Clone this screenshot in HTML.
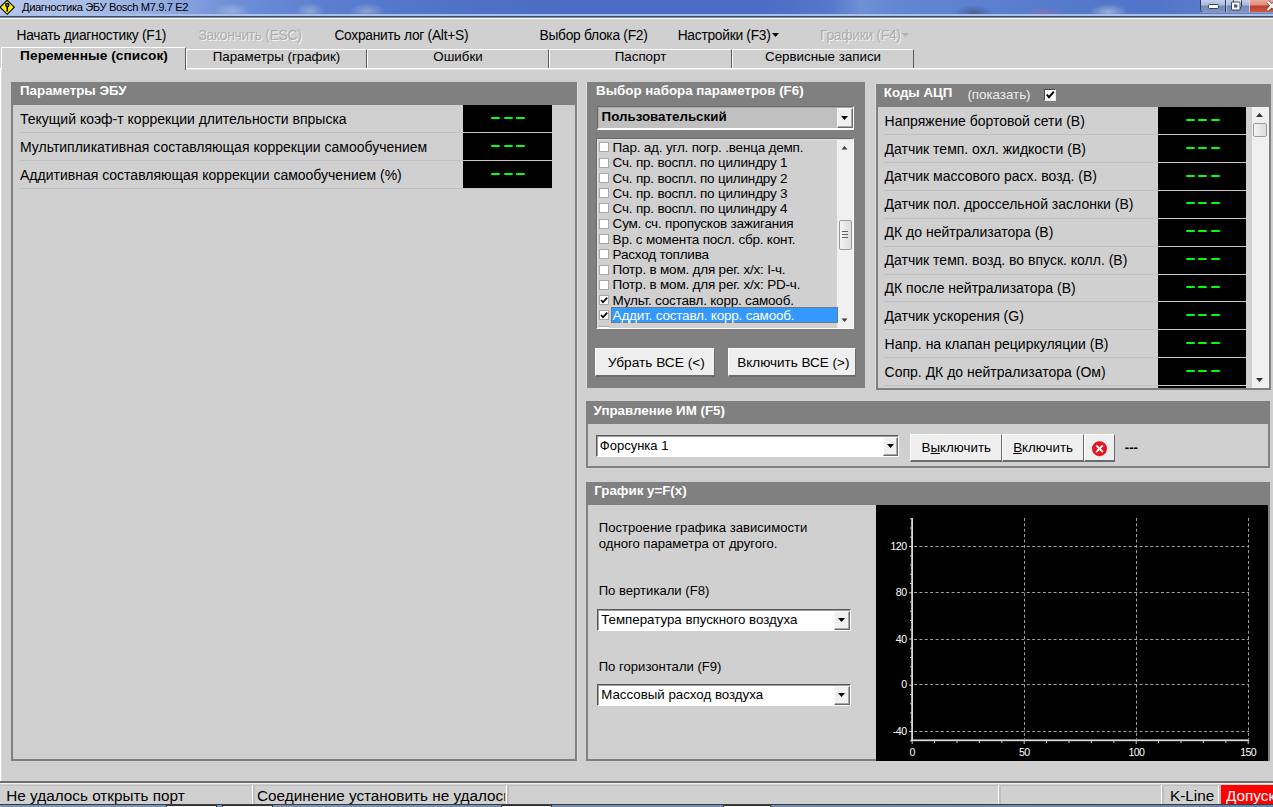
<!DOCTYPE html>
<html><head><meta charset="utf-8"><style>
html,body{margin:0;padding:0;width:1273px;height:807px;overflow:hidden;background:#d0d0d0;}
body{position:relative;font-family:"Liberation Sans",sans-serif;}
body>div{position:absolute;}
.t{white-space:nowrap;}
.btn{background:#efefef;border-top:1px solid #fcfcfc;border-left:1px solid #fcfcfc;border-right:1px solid #6b6b6b;border-bottom:2px solid #6b6b6b;box-sizing:border-box;}
</style></head><body>
<div style="left:0;top:0;width:1273px;height:16px;background:linear-gradient(90deg,#b4c6ea 0px,#a9bde6 90px,#8ea8e0 170px,#6f8fd8 230px,#5c7fd0 320px,#5175c9 420px,#4a6cc4 560px,#4a6cc4 760px,#5578cb 830px,#6f90d8 860px,#6186d2 900px,#5a7fcf 1000px,#4f74c8 1150px,#5a7bcb 1200px,#6a8ad2 1273px)"></div>
<div style="left:212px;top:0;width:40px;height:16px;background:radial-gradient(ellipse 18.0px 8px at 50% 11px,rgba(190,200,220,0.55),rgba(0,0,0,0))"></div>
<div style="left:293px;top:0;width:34px;height:16px;background:radial-gradient(ellipse 15.0px 8px at 50% 11px,rgba(190,200,220,0.5),rgba(0,0,0,0))"></div>
<div style="left:347px;top:0;width:40px;height:16px;background:radial-gradient(ellipse 18.0px 8px at 50% 11px,rgba(190,200,220,0.5),rgba(0,0,0,0))"></div>
<div style="left:952px;top:0;width:44px;height:16px;background:radial-gradient(ellipse 20.0px 8px at 50% 13px,rgba(60,70,100,0.55),rgba(0,0,0,0))"></div>
<div style="left:1020px;top:0;width:47px;height:16px;background:radial-gradient(ellipse 21.5px 8px at 50% 14px,rgba(170,110,160,0.5),rgba(0,0,0,0))"></div>
<div style="left:1087px;top:0;width:43px;height:16px;background:radial-gradient(ellipse 19.5px 8px at 50% 12px,rgba(200,210,230,0.6),rgba(0,0,0,0))"></div>
<div style="left:0px;top:14px;width:1273px;height:2px;background:#a9c0ea"></div>
<div style="left:0px;top:16px;width:1273px;height:1px;background:#3c4e72"></div>
<div style="left:0px;top:17px;width:1273px;height:1px;background:#7a879c"></div>
<div style="left:0px;top:18px;width:1273px;height:1px;background:#ffffff"></div>
<svg style="position:absolute;left:0;top:0" width="16" height="16" viewBox="0 0 16 16"><path d="M7.2 0.3 L14.3 7.2 L7.2 14.3 L0.1 7.2 Z" fill="#ffee00" stroke="#000" stroke-width="1.1"/><circle cx="7.3" cy="5.1" r="1.55" fill="#b8b000" stroke="#000" stroke-width="1.4"/><rect x="6.5" y="6.6" width="1.6" height="5" fill="#000"/></svg>
<div class="t" style="left:22px;top:2.02px;font-size:11.2px;line-height:11.2px;color:#000;letter-spacing:-0.4px">Диагностика ЭБУ Bosch M7.9.7 E2</div>
<svg style="position:absolute;left:1195px;top:0" width="78" height="16" viewBox="1195 0 78 16">
<defs>
<linearGradient id="gb" x1="0" y1="0" x2="0" y2="1"><stop offset="0" stop-color="#c3cfe8"/><stop offset="0.4" stop-color="#a9b9dc"/><stop offset="0.45" stop-color="#7189bb"/><stop offset="1" stop-color="#8297c4"/></linearGradient>
<linearGradient id="gr" x1="0" y1="0" x2="0" y2="1"><stop offset="0" stop-color="#e9aca0"/><stop offset="0.4" stop-color="#dc8d7c"/><stop offset="0.45" stop-color="#c0392a"/><stop offset="1" stop-color="#d26048"/></linearGradient>
</defs>
<path d="M1200 0 V9.5 Q1200 13 1203.5 13 H1249 V0 Z" fill="url(#gb)"/><path d="M1200.5 0 V9.5 Q1200.5 12.5 1203.5 12.5 H1249" fill="none" stroke="#2f3b55" stroke-width="1"/>
<rect x="1249" y="0" width="24" height="13" fill="url(#gr)"/>
<line x1="1249.5" y1="0" x2="1249.5" y2="13" stroke="#e9eef8" stroke-width="1" opacity="0.7"/>
<line x1="1225.5" y1="0" x2="1225.5" y2="13" stroke="#2f3b55" stroke-width="1"/>
<line x1="1226.5" y1="0" x2="1226.5" y2="13" stroke="#dfe6f5" stroke-width="0.8" opacity="0.6"/>
<line x1="1201" y1="12.5" x2="1273" y2="12.5" stroke="#8e98ae" stroke-width="1.2"/>
<rect x="1208.5" y="4.5" width="10" height="4" rx="1" fill="#fff" stroke="#2a3346" stroke-width="0.9"/>
<rect x="1233.5" y="-0.5" width="8" height="8" rx="1" fill="#dfe4ee" stroke="#2a3346" stroke-width="0.9"/>
<rect x="1231.5" y="2" width="8.5" height="8" rx="1" fill="#fff" stroke="#2a3346" stroke-width="0.9"/>
<rect x="1234" y="4.5" width="3.5" height="3" fill="#3d5a9a"/>
<path d="M1267.5 1.5 L1276 10 M1276 1.5 L1267.5 10" stroke="#4a2a2a" stroke-width="3.6" opacity="0.8"/>
<path d="M1267.5 1.5 L1276 10 M1276 1.5 L1267.5 10" stroke="#f4f4f4" stroke-width="2.3"/>
</svg>
<div class="t" style="left:16.5px;top:28.52px;font-size:13.8px;line-height:13.8px;color:#000;letter-spacing:-0.28px">Начать диагностику (F1)</div>
<div class="t" style="left:198.4px;top:28.52px;font-size:13.8px;line-height:13.8px;color:#adadad;letter-spacing:-0.28px;text-shadow:1px 1px 0 #f4f4f4">Закончить (ESC)</div>
<div class="t" style="left:334.4px;top:28.52px;font-size:13.8px;line-height:13.8px;color:#000;letter-spacing:-0.28px">Сохранить лог (Alt+S)</div>
<div class="t" style="left:539.5px;top:28.52px;font-size:13.8px;line-height:13.8px;color:#000;letter-spacing:-0.28px">Выбор блока (F2)</div>
<div class="t" style="left:677.7px;top:28.52px;font-size:13.8px;line-height:13.8px;color:#000;letter-spacing:-0.28px">Настройки (F3)</div>
<svg style="position:absolute;left:772px;top:33px" width="8" height="5"><path d="M0 0H7L3.5 4Z" fill="#000"/></svg>
<div class="t" style="left:820px;top:28.52px;font-size:13.8px;line-height:13.8px;color:#adadad;letter-spacing:-0.28px;text-shadow:1px 1px 0 #f4f4f4">Графики (F4)</div>
<svg style="position:absolute;left:902px;top:33px" width="8" height="5"><path d="M0 0H7L3.5 4Z" fill="#b0b0b0"/></svg>
<div style="left:0px;top:68px;width:1273px;height:1px;background:#fff"></div>
<div style="left:0px;top:69px;width:1273px;height:1px;background:#e4e4e4"></div>
<div style="left:186px;top:49px;width:181px;height:19px;border-top:1px solid #fff;border-left:1px solid #fff;border-right:1px solid #5a5a5a;box-sizing:border-box"></div>
<div class="t" style="left:186px;width:181px;top:50.22px;font-size:13.33px;line-height:13.33px;text-align:center">Параметры (график)</div>
<div style="left:367px;top:49px;width:182px;height:19px;border-top:1px solid #fff;border-left:1px solid #fff;border-right:1px solid #5a5a5a;box-sizing:border-box"></div>
<div class="t" style="left:367px;width:182px;top:50.22px;font-size:13.33px;line-height:13.33px;text-align:center">Ошибки</div>
<div style="left:549px;top:49px;width:183px;height:19px;border-top:1px solid #fff;border-left:1px solid #fff;border-right:1px solid #5a5a5a;box-sizing:border-box"></div>
<div class="t" style="left:549px;width:183px;top:50.22px;font-size:13.33px;line-height:13.33px;text-align:center">Паспорт</div>
<div style="left:732px;top:49px;width:182px;height:19px;border-top:1px solid #fff;border-left:1px solid #fff;border-right:1px solid #5a5a5a;box-sizing:border-box"></div>
<div class="t" style="left:732px;width:182px;top:50.22px;font-size:13.33px;line-height:13.33px;text-align:center">Сервисные записи</div>
<div style="left:1px;top:47px;width:185px;height:23px;background:#d0d0d0;border-top:1px solid #fff;border-left:1px solid #fff;border-right:1px solid #5a5a5a;box-sizing:border-box"></div>
<div class="t" style="left:20.1px;top:49.00px;font-size:13.7px;line-height:13.7px;color:#000;font-weight:bold;letter-spacing:0.05px">Переменные (список)</div>
<div style="left:0px;top:69px;width:1px;height:712px;background:#fff"></div>
<div style="left:1px;top:69px;width:1px;height:712px;background:#dadada"></div>
<div style="left:11px;top:82px;width:566px;height:679px;background:#808080"></div>
<div style="left:13px;top:105px;width:562px;height:654px;background:#d0d0d0"></div>
<div class="t" style="left:20px;top:84.42px;font-size:13.33px;line-height:13.33px;color:#fff;font-weight:bold;">Параметры ЭБУ</div>
<div class="t" style="left:20px;top:111.85px;font-size:14px;line-height:14px;color:#000;transform:scaleY(1.07);transform-origin:0 11.85px;">Текущий коэф-т коррекции длительности впрыска</div>
<div style="left:20px;top:132px;width:443px;height:1px;background:#c0c0c0"></div>
<div style="left:463px;top:105px;width:89px;height:27px;background:#000"></div>
<div style="left:463px;top:132px;width:89px;height:1px;background:#c8c8c8"></div>
<div style="left:491.0px;top:117px;width:9px;height:2px;background:#00ff00;border-radius:1px"></div>
<div style="left:503.5px;top:117px;width:9px;height:2px;background:#00ff00;border-radius:1px"></div>
<div style="left:516.0px;top:117px;width:9px;height:2px;background:#00ff00;border-radius:1px"></div>
<div class="t" style="left:20px;top:139.75px;font-size:14px;line-height:14px;color:#000;transform:scaleY(1.07);transform-origin:0 11.85px;">Мультипликативная составляющая коррекции самообучением</div>
<div style="left:20px;top:160px;width:443px;height:1px;background:#c0c0c0"></div>
<div style="left:463px;top:133px;width:89px;height:27px;background:#000"></div>
<div style="left:463px;top:160px;width:89px;height:1px;background:#c8c8c8"></div>
<div style="left:491.0px;top:145px;width:9px;height:2px;background:#00ff00;border-radius:1px"></div>
<div style="left:503.5px;top:145px;width:9px;height:2px;background:#00ff00;border-radius:1px"></div>
<div style="left:516.0px;top:145px;width:9px;height:2px;background:#00ff00;border-radius:1px"></div>
<div class="t" style="left:20px;top:167.65px;font-size:14px;line-height:14px;color:#000;transform:scaleY(1.07);transform-origin:0 11.85px;">Аддитивная составляющая коррекции самообучением (%)</div>
<div style="left:20px;top:188px;width:443px;height:1px;background:#c0c0c0"></div>
<div style="left:463px;top:161px;width:89px;height:27px;background:#000"></div>
<div style="left:463px;top:188px;width:89px;height:1px;background:#c8c8c8"></div>
<div style="left:491.0px;top:173px;width:9px;height:2px;background:#00ff00;border-radius:1px"></div>
<div style="left:503.5px;top:173px;width:9px;height:2px;background:#00ff00;border-radius:1px"></div>
<div style="left:516.0px;top:173px;width:9px;height:2px;background:#00ff00;border-radius:1px"></div>
<div style="left:587px;top:82px;width:278px;height:306px;background:#808080"></div>
<div style="left:586px;top:82px;width:1px;height:306px;background:#dcdcdc"></div>
<div style="left:577px;top:82px;width:1px;height:679px;background:#dcdcdc"></div>
<div style="left:875px;top:84px;width:1px;height:306px;background:#dcdcdc"></div>
<div class="t" style="left:596px;top:84.22px;font-size:13.33px;line-height:13.33px;color:#fff;font-weight:bold;">Выбор набора параметров (F6)</div>
<div style="left:597px;top:106px;width:257px;height:24px;border-top:1px solid #6a6a6a;border-left:1px solid #6a6a6a;border-right:1px solid #fff;border-bottom:2px solid #fff;box-shadow:inset 1px 1px 0 #a8a8a8;box-sizing:border-box;background:#c0c0c0"></div>
<div style="left:837px;top:108px;width:16px;height:20px;background:#f0f0f0;border-top:1px solid #fafafa;border-left:1px solid #fafafa;border-right:1px solid #696969;border-bottom:1px solid #696969;box-shadow:inset -1px -1px 0 #a8a8a8;box-sizing:border-box"></div>
<svg style="position:absolute;left:841px;top:116px" width="8" height="5"><path d="M0 0H7L3.5 4Z" fill="#000"/></svg>
<div class="t" style="left:601.6px;top:110.42px;font-size:13.33px;line-height:13.33px;color:#000;font-weight:bold;">Пользовательский</div>
<div style="left:596px;top:138px;width:258px;height:191px;border-top:1px solid #6a6a6a;border-left:1px solid #6a6a6a;border-right:1px solid #fff;border-bottom:1px solid #fff;box-shadow:inset 1px 1px 0 #e4e4e4;box-sizing:border-box;background:#d0d0d0"></div>
<div style="left:837px;top:140px;width:16px;height:188px;background:#f0f0f0"></div>
<svg style="position:absolute;left:841px;top:145px" width="8" height="5"><path d="M0.5 4.5H6.5L3.5 1Z" fill="#404040"/></svg>
<svg style="position:absolute;left:841px;top:318px" width="8" height="5"><path d="M0.5 0.5H6.5L3.5 4Z" fill="#404040"/></svg>
<div style="left:839px;top:220px;width:13px;height:30px;border:1px solid #9a9a9a;border-radius:2px;box-sizing:border-box;background:linear-gradient(90deg,#f4f4f4,#dcdcdc)"></div>
<div style="left:842px;top:231px;width:6px;height:1px;background:#606060"></div>
<div style="left:842px;top:234px;width:6px;height:1px;background:#606060"></div>
<div style="left:842px;top:237px;width:6px;height:1px;background:#606060"></div>
<div class="t" style="left:612.6px;top:140.97px;font-size:13.5px;line-height:13.5px;color:#000;letter-spacing:-0.2px">Пар. ад. угл. погр. .венца демп.</div>
<div style="left:599px;top:142.4px;width:10px;height:10px;background:#fff;border:1px solid #a8a8a8;box-sizing:border-box"></div>
<div class="t" style="left:612.6px;top:156.24px;font-size:13.5px;line-height:13.5px;color:#000;letter-spacing:-0.2px">Сч. пр. воспл. по цилиндру 1</div>
<div style="left:599px;top:157.67000000000002px;width:10px;height:10px;background:#fff;border:1px solid #a8a8a8;box-sizing:border-box"></div>
<div class="t" style="left:612.6px;top:171.51px;font-size:13.5px;line-height:13.5px;color:#000;letter-spacing:-0.2px">Сч. пр. воспл. по цилиндру 2</div>
<div style="left:599px;top:172.94px;width:10px;height:10px;background:#fff;border:1px solid #a8a8a8;box-sizing:border-box"></div>
<div class="t" style="left:612.6px;top:186.78px;font-size:13.5px;line-height:13.5px;color:#000;letter-spacing:-0.2px">Сч. пр. воспл. по цилиндру 3</div>
<div style="left:599px;top:188.21px;width:10px;height:10px;background:#fff;border:1px solid #a8a8a8;box-sizing:border-box"></div>
<div class="t" style="left:612.6px;top:202.05px;font-size:13.5px;line-height:13.5px;color:#000;letter-spacing:-0.2px">Сч. пр. воспл. по цилиндру 4</div>
<div style="left:599px;top:203.48000000000002px;width:10px;height:10px;background:#fff;border:1px solid #a8a8a8;box-sizing:border-box"></div>
<div class="t" style="left:612.6px;top:217.32px;font-size:13.5px;line-height:13.5px;color:#000;letter-spacing:-0.2px">Сум. сч. пропусков зажигания</div>
<div style="left:599px;top:218.75px;width:10px;height:10px;background:#fff;border:1px solid #a8a8a8;box-sizing:border-box"></div>
<div class="t" style="left:612.6px;top:232.59px;font-size:13.5px;line-height:13.5px;color:#000;letter-spacing:-0.2px">Вр. с момента посл. сбр. конт.</div>
<div style="left:599px;top:234.02px;width:10px;height:10px;background:#fff;border:1px solid #a8a8a8;box-sizing:border-box"></div>
<div class="t" style="left:612.6px;top:247.86px;font-size:13.5px;line-height:13.5px;color:#000;letter-spacing:-0.2px">Расход топлива</div>
<div style="left:599px;top:249.29000000000002px;width:10px;height:10px;background:#fff;border:1px solid #a8a8a8;box-sizing:border-box"></div>
<div class="t" style="left:612.6px;top:263.13px;font-size:13.5px;line-height:13.5px;color:#000;letter-spacing:-0.2px">Потр. в мом. для рег. х/х: I-ч.</div>
<div style="left:599px;top:264.56px;width:10px;height:10px;background:#fff;border:1px solid #a8a8a8;box-sizing:border-box"></div>
<div class="t" style="left:612.6px;top:278.40px;font-size:13.5px;line-height:13.5px;color:#000;letter-spacing:-0.2px">Потр. в мом. для рег. х/х: PD-ч.</div>
<div style="left:599px;top:279.83000000000004px;width:10px;height:10px;background:#fff;border:1px solid #a8a8a8;box-sizing:border-box"></div>
<div class="t" style="left:612.6px;top:293.67px;font-size:13.5px;line-height:13.5px;color:#000;letter-spacing:-0.2px">Мульт. составл. корр. самооб.</div>
<div style="left:599px;top:295.1px;width:10px;height:10px;background:#fff;border:1px solid #a8a8a8;box-sizing:border-box"></div>
<svg style="position:absolute;left:599px;top:295.1px" width="10" height="10"><path d="M2 5L4 7.3L8.2 2.6" stroke="#000" stroke-width="1.7" fill="none"/></svg>
<div style="left:611px;top:307.37px;width:227px;height:16px;background:#3399ff;outline:1px dotted #a06020;outline-offset:-1px"></div>
<div class="t" style="left:612.6px;top:308.94px;font-size:13.5px;line-height:13.5px;color:#fff;letter-spacing:-0.2px">Аддит. составл. корр. самооб.</div>
<div style="left:599px;top:310.37px;width:10px;height:10px;background:#fff;border:1px solid #a8a8a8;box-sizing:border-box"></div>
<svg style="position:absolute;left:599px;top:310.4px" width="10" height="10"><path d="M2 5L4 7.3L8.2 2.6" stroke="#000" stroke-width="1.7" fill="none"/></svg>
<div style="left:599px;top:325.64px;width:10px;height:2.5px;background:#fff;border-top:1px solid #a8a8a8;box-sizing:border-box"></div>
<div class="btn" style="left:595px;top:348px;width:120px;height:29px"></div>
<div class="t" style="left:607.8px;top:356.00px;font-size:13.7px;line-height:13.7px;color:#000;">Убрать ВСЕ (&lt;)</div>
<div class="btn" style="left:728px;top:348px;width:128px;height:29px"></div>
<div class="t" style="left:737.2px;top:356.17px;font-size:13.5px;line-height:13.5px;color:#000;">Включить ВСЕ (&gt;)</div>
<div style="left:876px;top:84px;width:395px;height:306px;background:#808080"></div>
<div style="left:878px;top:107px;width:391px;height:281px;background:#d0d0d0"></div>
<div class="t" style="left:883.8px;top:85.72px;font-size:13.33px;line-height:13.33px;color:#fff;font-weight:bold;">Коды АЦП</div>
<div class="t" style="left:967.4px;top:88.32px;font-size:13.33px;line-height:13.33px;color:#ececec;">(показать)</div>
<div style="left:1044px;top:89px;width:12px;height:12px;background:#fff;border-top:1px solid #4a4a4a;border-left:1px solid #4a4a4a;border-right:1px solid #e8e8e8;border-bottom:1px solid #e8e8e8;box-sizing:border-box"></div>
<svg style="position:absolute;left:1044px;top:89px" width="12" height="12"><path d="M2.8 5.6L5 8.2L9.8 2.6" stroke="#000" stroke-width="2" fill="none"/></svg>
<div class="t" style="left:884.6px;top:113.65px;font-size:14px;line-height:14px;color:#000;transform:scaleY(1.05);transform-origin:0 11.85px;">Напряжение бортовой сети (В)</div>
<div style="left:884px;top:134px;width:274px;height:1px;background:#c0c0c0"></div>
<div style="left:1158px;top:107px;width:88px;height:27px;background:#000"></div>
<div style="left:1158px;top:134px;width:88px;height:1px;background:#c8c8c8"></div>
<div style="left:1186.0px;top:119px;width:9px;height:2px;background:#00ff00;border-radius:1px"></div>
<div style="left:1198.4px;top:119px;width:9px;height:2px;background:#00ff00;border-radius:1px"></div>
<div style="left:1210.8px;top:119px;width:9px;height:2px;background:#00ff00;border-radius:1px"></div>
<div class="t" style="left:884.6px;top:141.55px;font-size:14px;line-height:14px;color:#000;transform:scaleY(1.05);transform-origin:0 11.85px;">Датчик темп. охл. жидкости (В)</div>
<div style="left:884px;top:162px;width:274px;height:1px;background:#c0c0c0"></div>
<div style="left:1158px;top:135px;width:88px;height:27px;background:#000"></div>
<div style="left:1158px;top:162px;width:88px;height:1px;background:#c8c8c8"></div>
<div style="left:1186.0px;top:147px;width:9px;height:2px;background:#00ff00;border-radius:1px"></div>
<div style="left:1198.4px;top:147px;width:9px;height:2px;background:#00ff00;border-radius:1px"></div>
<div style="left:1210.8px;top:147px;width:9px;height:2px;background:#00ff00;border-radius:1px"></div>
<div class="t" style="left:884.6px;top:169.45px;font-size:14px;line-height:14px;color:#000;transform:scaleY(1.05);transform-origin:0 11.85px;">Датчик массового расх. возд. (В)</div>
<div style="left:884px;top:190px;width:274px;height:1px;background:#c0c0c0"></div>
<div style="left:1158px;top:163px;width:88px;height:27px;background:#000"></div>
<div style="left:1158px;top:190px;width:88px;height:1px;background:#c8c8c8"></div>
<div style="left:1186.0px;top:175px;width:9px;height:2px;background:#00ff00;border-radius:1px"></div>
<div style="left:1198.4px;top:175px;width:9px;height:2px;background:#00ff00;border-radius:1px"></div>
<div style="left:1210.8px;top:175px;width:9px;height:2px;background:#00ff00;border-radius:1px"></div>
<div class="t" style="left:884.6px;top:197.35px;font-size:14px;line-height:14px;color:#000;transform:scaleY(1.05);transform-origin:0 11.85px;">Датчик пол. дроссельной заслонки (В)</div>
<div style="left:884px;top:218px;width:274px;height:1px;background:#c0c0c0"></div>
<div style="left:1158px;top:191px;width:88px;height:27px;background:#000"></div>
<div style="left:1158px;top:218px;width:88px;height:1px;background:#c8c8c8"></div>
<div style="left:1186.0px;top:202px;width:9px;height:2px;background:#00ff00;border-radius:1px"></div>
<div style="left:1198.4px;top:202px;width:9px;height:2px;background:#00ff00;border-radius:1px"></div>
<div style="left:1210.8px;top:202px;width:9px;height:2px;background:#00ff00;border-radius:1px"></div>
<div class="t" style="left:884.6px;top:225.25px;font-size:14px;line-height:14px;color:#000;transform:scaleY(1.05);transform-origin:0 11.85px;">ДК до нейтрализатора (В)</div>
<div style="left:884px;top:246px;width:274px;height:1px;background:#c0c0c0"></div>
<div style="left:1158px;top:219px;width:88px;height:27px;background:#000"></div>
<div style="left:1158px;top:246px;width:88px;height:1px;background:#c8c8c8"></div>
<div style="left:1186.0px;top:230px;width:9px;height:2px;background:#00ff00;border-radius:1px"></div>
<div style="left:1198.4px;top:230px;width:9px;height:2px;background:#00ff00;border-radius:1px"></div>
<div style="left:1210.8px;top:230px;width:9px;height:2px;background:#00ff00;border-radius:1px"></div>
<div class="t" style="left:884.6px;top:253.15px;font-size:14px;line-height:14px;color:#000;transform:scaleY(1.05);transform-origin:0 11.85px;">Датчик темп. возд. во впуск. колл. (В)</div>
<div style="left:884px;top:274px;width:274px;height:1px;background:#c0c0c0"></div>
<div style="left:1158px;top:247px;width:88px;height:27px;background:#000"></div>
<div style="left:1158px;top:274px;width:88px;height:1px;background:#c8c8c8"></div>
<div style="left:1186.0px;top:258px;width:9px;height:2px;background:#00ff00;border-radius:1px"></div>
<div style="left:1198.4px;top:258px;width:9px;height:2px;background:#00ff00;border-radius:1px"></div>
<div style="left:1210.8px;top:258px;width:9px;height:2px;background:#00ff00;border-radius:1px"></div>
<div class="t" style="left:884.6px;top:281.05px;font-size:14px;line-height:14px;color:#000;transform:scaleY(1.05);transform-origin:0 11.85px;">ДК после нейтрализатора (В)</div>
<div style="left:884px;top:301px;width:274px;height:1px;background:#c0c0c0"></div>
<div style="left:1158px;top:275px;width:88px;height:26px;background:#000"></div>
<div style="left:1158px;top:301px;width:88px;height:1px;background:#c8c8c8"></div>
<div style="left:1186.0px;top:286px;width:9px;height:2px;background:#00ff00;border-radius:1px"></div>
<div style="left:1198.4px;top:286px;width:9px;height:2px;background:#00ff00;border-radius:1px"></div>
<div style="left:1210.8px;top:286px;width:9px;height:2px;background:#00ff00;border-radius:1px"></div>
<div class="t" style="left:884.6px;top:308.95px;font-size:14px;line-height:14px;color:#000;transform:scaleY(1.05);transform-origin:0 11.85px;">Датчик ускорения (G)</div>
<div style="left:884px;top:329px;width:274px;height:1px;background:#c0c0c0"></div>
<div style="left:1158px;top:302px;width:88px;height:27px;background:#000"></div>
<div style="left:1158px;top:329px;width:88px;height:1px;background:#c8c8c8"></div>
<div style="left:1186.0px;top:314px;width:9px;height:2px;background:#00ff00;border-radius:1px"></div>
<div style="left:1198.4px;top:314px;width:9px;height:2px;background:#00ff00;border-radius:1px"></div>
<div style="left:1210.8px;top:314px;width:9px;height:2px;background:#00ff00;border-radius:1px"></div>
<div class="t" style="left:884.6px;top:336.85px;font-size:14px;line-height:14px;color:#000;transform:scaleY(1.05);transform-origin:0 11.85px;">Напр. на клапан рециркуляции (В)</div>
<div style="left:884px;top:357px;width:274px;height:1px;background:#c0c0c0"></div>
<div style="left:1158px;top:330px;width:88px;height:27px;background:#000"></div>
<div style="left:1158px;top:357px;width:88px;height:1px;background:#c8c8c8"></div>
<div style="left:1186.0px;top:342px;width:9px;height:2px;background:#00ff00;border-radius:1px"></div>
<div style="left:1198.4px;top:342px;width:9px;height:2px;background:#00ff00;border-radius:1px"></div>
<div style="left:1210.8px;top:342px;width:9px;height:2px;background:#00ff00;border-radius:1px"></div>
<div class="t" style="left:884.6px;top:364.75px;font-size:14px;line-height:14px;color:#000;transform:scaleY(1.05);transform-origin:0 11.85px;">Сопр. ДК до нейтрализатора (Ом)</div>
<div style="left:884px;top:385px;width:274px;height:1px;background:#c0c0c0"></div>
<div style="left:1158px;top:358px;width:88px;height:27px;background:#000"></div>
<div style="left:1158px;top:385px;width:88px;height:1px;background:#c8c8c8"></div>
<div style="left:1186.0px;top:370px;width:9px;height:2px;background:#00ff00;border-radius:1px"></div>
<div style="left:1198.4px;top:370px;width:9px;height:2px;background:#00ff00;border-radius:1px"></div>
<div style="left:1210.8px;top:370px;width:9px;height:2px;background:#00ff00;border-radius:1px"></div>
<div style="left:1158px;top:386px;width:88px;height:2px;background:#000"></div>
<div style="left:1246px;top:107px;width:6px;height:281px;background:#cfcfcf"></div>
<div style="left:1252px;top:107px;width:17px;height:281px;background:#f0f0f0"></div>
<svg style="position:absolute;left:1256px;top:113px" width="8" height="5"><path d="M0 4H7L3.5 0Z" fill="#333"/></svg>
<svg style="position:absolute;left:1256px;top:378px" width="8" height="5"><path d="M0 0H7L3.5 4Z" fill="#333"/></svg>
<div style="left:1253px;top:123px;width:14px;height:14px;border:1px solid #9a9a9a;border-radius:2px;box-sizing:border-box;background:linear-gradient(90deg,#f4f4f4,#dcdcdc)"></div>
<div style="left:586px;top:401px;width:684px;height:67px;background:#808080"></div>
<div style="left:588px;top:424px;width:680px;height:42px;background:#d0d0d0"></div>
<div class="t" style="left:593.6px;top:403.52px;font-size:13.33px;line-height:13.33px;color:#fff;font-weight:bold;">Управление ИМ (F5)</div>
<div style="left:596px;top:435px;width:303px;height:22px;border-top:1px solid #5a5a5a;border-left:1px solid #5a5a5a;border-right:1px solid #fff;border-bottom:1px solid #fff;box-shadow:inset 1px 1px 0 #9c9c9c;box-sizing:border-box;background:#fff"></div>
<div style="left:883px;top:437px;width:15px;height:19px;background:#f0f0f0;border-top:1px solid #fafafa;border-left:1px solid #fafafa;border-right:1px solid #696969;border-bottom:1px solid #696969;box-shadow:inset -1px -1px 0 #a8a8a8;box-sizing:border-box"></div>
<svg style="position:absolute;left:887px;top:444px" width="8" height="5"><path d="M0 0H7L3.5 4Z" fill="#000"/></svg>
<div class="t" style="left:599.8px;top:439.10px;font-size:13px;line-height:13px;color:#000;">Форсунка 1</div>
<div class="btn" style="left:910px;top:434px;width:92px;height:28px"></div>
<div class="t" style="left:921.6px;top:441.32px;font-size:13.33px;line-height:13.33px;color:#000;">В<u>ы</u>ключить</div>
<div class="btn" style="left:1002px;top:434px;width:82px;height:28px"></div>
<div class="t" style="left:1013.2px;top:441.32px;font-size:13.33px;line-height:13.33px;color:#000;"><u>В</u>ключить</div>
<div class="btn" style="left:1084px;top:434px;width:31px;height:28px"></div>
<svg style="position:absolute;left:1091px;top:441px" width="17" height="16" viewBox="0 0 17 16"><circle cx="8.5" cy="7.7" r="7.2" fill="#e8141c" stroke="#c8000a" stroke-width="0.5"/><path d="M5.2 4.4L11.8 11M11.8 4.4L5.2 11" stroke="#fff" stroke-width="1.9"/></svg>
<div class="t" style="left:1124.7px;top:440.72px;font-size:13.33px;line-height:13.33px;color:#000;font-weight:bold;">---</div>
<div style="left:586px;top:482px;width:684px;height:279px;background:#808080"></div>
<div style="left:588px;top:505px;width:680px;height:254px;background:#d0d0d0"></div>
<div class="t" style="left:594.2px;top:484.22px;font-size:13.33px;line-height:13.33px;color:#fff;font-weight:bold;">График y=F(x)</div>
<div class="t" style="left:598.8px;top:521.31px;font-size:13.1px;line-height:13.1px;color:#000;">Построение графика зависимости</div>
<div class="t" style="left:598.8px;top:536.61px;font-size:13.1px;line-height:13.1px;color:#000;">одного параметра от другого.</div>
<div class="t" style="left:598.7px;top:584.31px;font-size:13.1px;line-height:13.1px;color:#000;">По вертикали (F8)</div>
<div class="t" style="left:598.7px;top:660.11px;font-size:13.1px;line-height:13.1px;color:#000;">По горизонтали (F9)</div>
<div style="left:597px;top:609px;width:254px;height:22px;border-top:1px solid #5a5a5a;border-left:1px solid #5a5a5a;border-right:1px solid #fff;border-bottom:1px solid #fff;box-shadow:inset 1px 1px 0 #9c9c9c;box-sizing:border-box;background:#fff"></div>
<div style="left:834px;top:611px;width:16px;height:19px;background:#f0f0f0;border-top:1px solid #fafafa;border-left:1px solid #fafafa;border-right:1px solid #696969;border-bottom:1px solid #696969;box-shadow:inset -1px -1px 0 #a8a8a8;box-sizing:border-box"></div>
<svg style="position:absolute;left:838px;top:618px" width="8" height="5"><path d="M0 0H7L3.5 4Z" fill="#000"/></svg>
<div class="t" style="left:601.2px;top:612.84px;font-size:13.3px;line-height:13.3px;color:#000;">Температура впускного воздуха</div>
<div style="left:597px;top:684px;width:254px;height:22px;border-top:1px solid #5a5a5a;border-left:1px solid #5a5a5a;border-right:1px solid #fff;border-bottom:1px solid #fff;box-shadow:inset 1px 1px 0 #9c9c9c;box-sizing:border-box;background:#fff"></div>
<div style="left:834px;top:686px;width:16px;height:19px;background:#f0f0f0;border-top:1px solid #fafafa;border-left:1px solid #fafafa;border-right:1px solid #696969;border-bottom:1px solid #696969;box-shadow:inset -1px -1px 0 #a8a8a8;box-sizing:border-box"></div>
<svg style="position:absolute;left:838px;top:693px" width="8" height="5"><path d="M0 0H7L3.5 4Z" fill="#000"/></svg>
<div class="t" style="left:601.2px;top:687.84px;font-size:13.3px;line-height:13.3px;color:#000;">Массовый расход воздуха</div>
<div style="left:876px;top:505px;width:392px;height:256px;background:#000"></div>
<svg style="position:absolute;left:876px;top:505px" width="392" height="256" viewBox="876 505 392 256"><line x1="914" y1="546.5" x2="1249" y2="546.5" stroke="#a0a0a0" stroke-width="1" stroke-dasharray="3 2.37"/><line x1="914" y1="592.5" x2="1249" y2="592.5" stroke="#a0a0a0" stroke-width="1" stroke-dasharray="3 2.37"/><line x1="914" y1="639.5" x2="1249" y2="639.5" stroke="#a0a0a0" stroke-width="1" stroke-dasharray="3 2.37"/><line x1="914" y1="684.5" x2="1249" y2="684.5" stroke="#a0a0a0" stroke-width="1" stroke-dasharray="3 2.37"/><line x1="914" y1="731.5" x2="1249" y2="731.5" stroke="#a0a0a0" stroke-width="1" stroke-dasharray="3 2.37"/><line x1="1024.5" y1="518" x2="1024.5" y2="739" stroke="#a0a0a0" stroke-width="1" stroke-dasharray="3 2.37"/><line x1="1136.5" y1="518" x2="1136.5" y2="739" stroke="#a0a0a0" stroke-width="1" stroke-dasharray="3 2.37"/><line x1="1248.5" y1="518" x2="1248.5" y2="739" stroke="#a0a0a0" stroke-width="1" stroke-dasharray="3 2.37"/><line x1="909" y1="731.5" x2="912" y2="731.5" stroke="#c8c8c8" stroke-width="1"/><line x1="910" y1="722.2" x2="912" y2="722.2" stroke="#c8c8c8" stroke-width="1"/><line x1="910" y1="713.0" x2="912" y2="713.0" stroke="#c8c8c8" stroke-width="1"/><line x1="910" y1="703.8" x2="912" y2="703.8" stroke="#c8c8c8" stroke-width="1"/><line x1="910" y1="694.5" x2="912" y2="694.5" stroke="#c8c8c8" stroke-width="1"/><line x1="909" y1="685.2" x2="912" y2="685.2" stroke="#c8c8c8" stroke-width="1"/><line x1="910" y1="676.0" x2="912" y2="676.0" stroke="#c8c8c8" stroke-width="1"/><line x1="910" y1="666.8" x2="912" y2="666.8" stroke="#c8c8c8" stroke-width="1"/><line x1="910" y1="657.5" x2="912" y2="657.5" stroke="#c8c8c8" stroke-width="1"/><line x1="910" y1="648.2" x2="912" y2="648.2" stroke="#c8c8c8" stroke-width="1"/><line x1="909" y1="639.0" x2="912" y2="639.0" stroke="#c8c8c8" stroke-width="1"/><line x1="910" y1="629.8" x2="912" y2="629.8" stroke="#c8c8c8" stroke-width="1"/><line x1="910" y1="620.5" x2="912" y2="620.5" stroke="#c8c8c8" stroke-width="1"/><line x1="910" y1="611.2" x2="912" y2="611.2" stroke="#c8c8c8" stroke-width="1"/><line x1="910" y1="602.0" x2="912" y2="602.0" stroke="#c8c8c8" stroke-width="1"/><line x1="909" y1="592.8" x2="912" y2="592.8" stroke="#c8c8c8" stroke-width="1"/><line x1="910" y1="583.5" x2="912" y2="583.5" stroke="#c8c8c8" stroke-width="1"/><line x1="910" y1="574.2" x2="912" y2="574.2" stroke="#c8c8c8" stroke-width="1"/><line x1="910" y1="565.0" x2="912" y2="565.0" stroke="#c8c8c8" stroke-width="1"/><line x1="910" y1="555.8" x2="912" y2="555.8" stroke="#c8c8c8" stroke-width="1"/><line x1="909" y1="546.5" x2="912" y2="546.5" stroke="#c8c8c8" stroke-width="1"/><line x1="910" y1="537.2" x2="912" y2="537.2" stroke="#c8c8c8" stroke-width="1"/><line x1="910" y1="528.0" x2="912" y2="528.0" stroke="#c8c8c8" stroke-width="1"/><line x1="910" y1="518.8" x2="912" y2="518.8" stroke="#c8c8c8" stroke-width="1"/><line x1="910" y1="740.8" x2="912" y2="740.8" stroke="#c8c8c8" stroke-width="1"/><line x1="912.2" y1="741" x2="912.2" y2="744" stroke="#c8c8c8" stroke-width="1"/><line x1="934.6" y1="741" x2="934.6" y2="743" stroke="#c8c8c8" stroke-width="1"/><line x1="957.0" y1="741" x2="957.0" y2="743" stroke="#c8c8c8" stroke-width="1"/><line x1="979.4" y1="741" x2="979.4" y2="743" stroke="#c8c8c8" stroke-width="1"/><line x1="1001.8" y1="741" x2="1001.8" y2="743" stroke="#c8c8c8" stroke-width="1"/><line x1="1024.2" y1="741" x2="1024.2" y2="744" stroke="#c8c8c8" stroke-width="1"/><line x1="1046.6" y1="741" x2="1046.6" y2="743" stroke="#c8c8c8" stroke-width="1"/><line x1="1069.0" y1="741" x2="1069.0" y2="743" stroke="#c8c8c8" stroke-width="1"/><line x1="1091.4" y1="741" x2="1091.4" y2="743" stroke="#c8c8c8" stroke-width="1"/><line x1="1113.8" y1="741" x2="1113.8" y2="743" stroke="#c8c8c8" stroke-width="1"/><line x1="1136.2" y1="741" x2="1136.2" y2="744" stroke="#c8c8c8" stroke-width="1"/><line x1="1158.6" y1="741" x2="1158.6" y2="743" stroke="#c8c8c8" stroke-width="1"/><line x1="1181.0" y1="741" x2="1181.0" y2="743" stroke="#c8c8c8" stroke-width="1"/><line x1="1203.4" y1="741" x2="1203.4" y2="743" stroke="#c8c8c8" stroke-width="1"/><line x1="1225.8" y1="741" x2="1225.8" y2="743" stroke="#c8c8c8" stroke-width="1"/><line x1="1248.2" y1="741" x2="1248.2" y2="744" stroke="#c8c8c8" stroke-width="1"/><rect x="911.2" y="518" width="1.8" height="223" fill="#d8d8d8"/><rect x="911" y="739.4" width="338" height="1.8" fill="#d8d8d8"/><text x="906.5" y="550.1" fill="#fff" font-size="10.6" letter-spacing="-0.55" text-anchor="end" font-family="Liberation Sans">120</text><text x="906.5" y="596.1" fill="#fff" font-size="10.6" letter-spacing="-0.55" text-anchor="end" font-family="Liberation Sans">80</text><text x="906.5" y="643.1" fill="#fff" font-size="10.6" letter-spacing="-0.55" text-anchor="end" font-family="Liberation Sans">40</text><text x="906.5" y="688.1" fill="#fff" font-size="10.6" letter-spacing="-0.55" text-anchor="end" font-family="Liberation Sans">0</text><text x="906.5" y="735.1" fill="#fff" font-size="10.6" letter-spacing="-0.55" text-anchor="end" font-family="Liberation Sans">-40</text><text x="912.2" y="755.8" fill="#fff" font-size="10.6" letter-spacing="-0.55" text-anchor="middle" font-family="Liberation Sans">0</text><text x="1024.3" y="755.8" fill="#fff" font-size="10.6" letter-spacing="-0.55" text-anchor="middle" font-family="Liberation Sans">50</text><text x="1136.4" y="755.8" fill="#fff" font-size="10.6" letter-spacing="-0.55" text-anchor="middle" font-family="Liberation Sans">100</text><text x="1248.2" y="755.8" fill="#fff" font-size="10.6" letter-spacing="-0.55" text-anchor="middle" font-family="Liberation Sans">150</text></svg>
<div style="left:0px;top:781px;width:1273px;height:2px;background:#6e6e6e"></div>
<div style="left:0px;top:783px;width:1273px;height:1px;background:#f0f0f0"></div>
<div style="left:0px;top:784px;width:1273px;height:21px;background:#d0d0d0"></div>
<div style="left:0px;top:785px;width:1273px;height:1px;background:#bfbfbf"></div>
<div style="left:252px;top:785px;width:1px;height:20px;background:#fff"></div>
<div style="left:253px;top:785px;width:2px;height:20px;background:#bdbdbd"></div>
<div style="left:506px;top:785px;width:1px;height:20px;background:#fff"></div>
<div style="left:507px;top:785px;width:2px;height:20px;background:#bdbdbd"></div>
<div style="left:998px;top:785px;width:1px;height:20px;background:#fff"></div>
<div style="left:999px;top:785px;width:2px;height:20px;background:#bdbdbd"></div>
<div style="left:1161px;top:785px;width:1px;height:20px;background:#fff"></div>
<div style="left:1162px;top:785px;width:2px;height:20px;background:#bdbdbd"></div>
<div style="left:1218px;top:785px;width:1px;height:20px;background:#fff"></div>
<div style="left:1219px;top:785px;width:2px;height:20px;background:#bdbdbd"></div>
<div style="left:1221px;top:785px;width:52px;height:20px;background:#ff0000"></div>
<div class="t" style="left:6.3px;top:788px;font-size:15.3px;line-height:16px;width:245px;overflow:hidden">Не удалось открыть порт</div>
<div class="t" style="left:257px;top:788px;font-size:15.3px;line-height:16px;width:248px;overflow:hidden;white-space:nowrap">Соединение установить не удалось</div>
<div class="t" style="left:1170px;top:788px;font-size:15.3px;line-height:16px">K-Line</div>
<div class="t" style="left:1226px;top:788px;font-size:15.3px;line-height:16px;color:#fff;width:47px;overflow:hidden">Допуск</div>
<div style="left:0px;top:804px;width:1273px;height:1px;background:#3a3a3a"></div>
<div style="left:0;top:805px;width:1273px;height:2px;background:linear-gradient(90deg,#7f95b8,#6c84ad)"></div>
<div style="left:166px;top:805px;width:51px;height:2px;background:#f4f4f4;border-left:1px solid #333;border-right:1px solid #333;border-top:1px solid #333;box-sizing:border-box"></div>
<div style="left:222px;top:805px;width:51px;height:2px;background:#f4f4f4;border-left:1px solid #333;border-right:1px solid #333;border-top:1px solid #333;box-sizing:border-box"></div>
<div style="left:501px;top:805px;width:51px;height:2px;background:#f4f4f4;border-left:1px solid #333;border-right:1px solid #333;border-top:1px solid #333;box-sizing:border-box"></div>
<div style="left:723px;top:805px;width:48px;height:2px;background:#f4f4f4;border-left:1px solid #333;border-right:1px solid #333;border-top:1px solid #333;box-sizing:border-box"></div>
</body></html>
